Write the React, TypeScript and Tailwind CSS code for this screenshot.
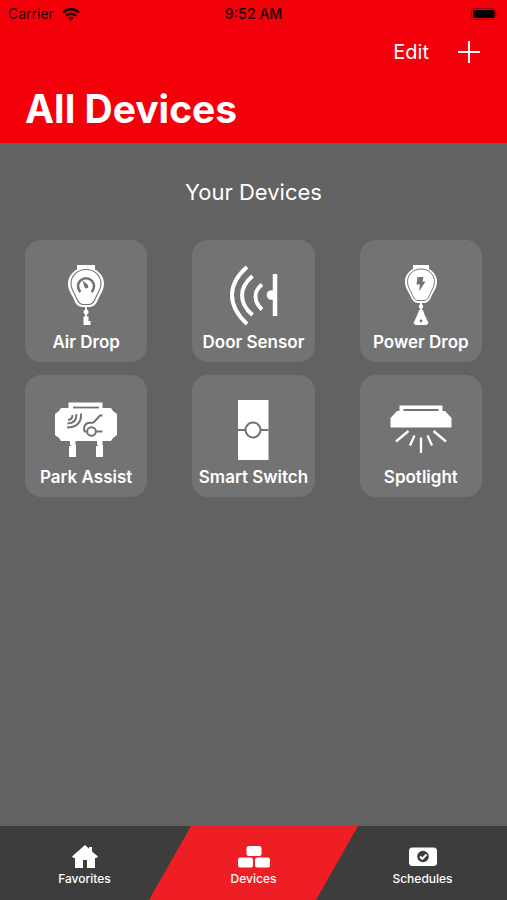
import type { ReactNode } from "react";

type Device = {
  name: string;
  icon: ReactNode;
};

// Lines cut out of the white icons use the card colour
const CARD = "#737373";

function AirDropIcon() {
  return (
    <>
      <path
        d="M23 2h18v4.500c5 2.500 9 8 9 14 0 6-3 10-5 14s-3 9.500-10 9.500h-6c-7 0-8-5.500-10-9.500s-5-8-5-14c0-6 4-11.500 9-14z"
        fill="white"
        stroke="none"
      />
      <path
        d="M32 6.500c9 0 15 7 15 14 0 5-2.500 8.500-4.500 12.500s-3 8.500-7.500 8.500h-6c-4.500 0-5.500-4.500-7.500-8.500S17 25.500 17 20.500c0-7 6-14 15-14z"
        stroke={CARD}
        strokeWidth="1.100"
      />
      <path d="M26.500 29a8 8 0 1 1 11 0" stroke={CARD} strokeWidth="2.600" />
      <path d="M28.500 17.500l5.500 4.500q1 3-1.500 3.500-2 0-2.500-3z" fill={CARD} stroke="none" />
      <path d="M32 43v15" strokeWidth="1.800" />
      <circle cx="32" cy="49" r="2.500" fill="white" stroke="none" />
      <path d="M29.500 53.500h5V58h2v4h-7v-8.500z" fill="white" stroke="none" />
    </>
  );
}

function DoorSensorIcon() {
  return (
    <g strokeWidth="4">
      <path d="M26 4Q11 17 11 32t15 29" />
      <path d="M31.500 13Q21 22 21 32.500T31.500 52" />
      <path d="M41 21.500q-6.500 5-6.500 12T41 46.500" />
      <path d="M54 11v42" strokeWidth="4.500" />
      <circle cx="50.500" cy="32" r="4.800" fill="white" stroke="none" />
    </g>
  );
}

function PowerDropIcon() {
  return (
    <>
      <path
        d="M24 2h16v4c4.500 2.500 8 7 8 12.500 0 5.500-2.500 9-4.500 12.500s-3 9-8.500 9h-6c-5.500 0-6.500-5.500-8.500-9S16 24 16 18.500C16 13 19.500 8.500 24 6z"
        fill="white"
        stroke="none"
      />
      <path
        d="M32 6c8 0 13.500 6 13.500 12.500 0 4.500-2.200 8-4 11.500s-2.500 7.500-6.500 7.500h-6c-4 0-4.700-4-6.500-7.500s-4-7-4-11.500C18.500 12 24 6 32 6z"
        stroke={CARD}
        strokeWidth="1"
      />
      <path d="M28.500 14h6l-1 4.500h3l-6.500 10 1-7h-3.500z" fill={CARD} stroke="none" />
      <path d="M32 38v12" strokeWidth="1.800" />
      <circle cx="32" cy="43.500" r="2.200" fill="white" stroke="none" />
      <path d="M30 47h4l1.500 4.500L39.500 60l-2 2h-11l-2-2 4-8.500z" fill="white" stroke="none" />
      <circle cx="32" cy="58" r="1.400" fill={CARD} stroke="none" />
    </>
  );
}

function ParkAssistIcon() {
  return (
    <>
      <path
        d="M14.500 4.500h34V10H57l2 3 4 3v21l-4 3-2 3H7l-2-3-4-3V16l4-3 2-3h7.500z"
        fill="white"
        stroke="none"
      />
      <path d="M19 9.500h26" stroke={CARD} strokeWidth="1.800" />
      <g stroke={CARD} strokeWidth="2">
        <path d="M27 15.500q1 13.500-14 14" />
        <path d="M22.500 16q0 9.500-9 9.500" />
        <path d="M18.500 17q0 4.500-4.500 5" />
        <path d="M48.500 17.500h-2.500l-6.500 7-5.500.5q-4 1.500-4 6 0 2.500 2.500 3" />
        <circle cx="37.500" cy="33.500" r="4.300" />
        <path d="M42 33.500h6.500" />
      </g>
      <path
        d="M16 43h5.500v4h.5v12h-7V47h1zM43 43h5.500v4h.5v12h-7V47h1z"
        fill="white"
        stroke="none"
      />
      <path d="M15 47.500h2M42 47.500h2" stroke={CARD} strokeWidth="1" />
    </>
  );
}

function SmartSwitchIcon() {
  return (
    <>
      <path d="M17 2h30.500v60H17z" fill="white" stroke="none" />
      <path d="M17 32h30.500" stroke={CARD} strokeWidth="2" />
      <circle cx="32" cy="32" r="7.500" fill="white" stroke={CARD} strokeWidth="2" />
    </>
  );
}

function SpotlightIcon() {
  return (
    <>
      <path
        d="M10.500 7.500h43V13H56l6.500 7v9.500H1.500V20L8 13h2.500z"
        fill="white"
        stroke="none"
      />
      <path d="M14.500 12h35" stroke={CARD} strokeWidth="2" />
      <g strokeWidth="2.300">
        <path d="M19.500 33L7 43.500M25.500 37.500L21 47.500M32 39.500V55M38.500 37.500l4.500 10M44.500 33L57 43.500" />
      </g>
    </>
  );
}

const devices: Device[] = [
  { name: "Air Drop", icon: <AirDropIcon /> },
  { name: "Door Sensor", icon: <DoorSensorIcon /> },
  { name: "Power Drop", icon: <PowerDropIcon /> },
  { name: "Park Assist", icon: <ParkAssistIcon /> },
  { name: "Smart Switch", icon: <SmartSwitchIcon /> },
  { name: "Spotlight", icon: <SpotlightIcon /> },
];

function DeviceCard({ name, icon }: Device) {
  return (
    <button className="flex flex-col items-center w-full h-[122px] pt-[23px] rounded-2xl bg-[#737373]">
      <svg viewBox="0 0 64 64" className="size-16 shrink-0" fill="none" stroke="white">
        {icon}
      </svg>
      <span className="text-[17px] leading-6 mt-[3px] font-semibold whitespace-nowrap">{name}</span>
    </button>
  );
}

function StatusBar() {
  return (
    <div className="grid grid-cols-3 items-center h-7 px-2 text-sm leading-4 text-black/85">
      <div className="flex items-center gap-2">
        <span>Carrier</span>
        <svg viewBox="0 0 18 13" className="w-[18px] h-[13px]" fill="none" stroke="currentColor">
          <path d="M1 4.500a11.500 11.500 0 0 1 16 0" strokeWidth="2.600" />
          <path d="M4 7.700a7.200 7.200 0 0 1 10 0" strokeWidth="2.400" />
          <path d="M9 13l-2.700-2.900a4 4 0 0 1 5.400 0z" fill="currentColor" stroke="none" />
        </svg>
      </div>
      <span className="text-center font-semibold">9:52 AM</span>
      <svg viewBox="0 0 28 12" className="w-7 h-3 justify-self-end">
        <rect x="0.500" y="0.500" width="24" height="11" rx="3.500" fill="none" stroke="black" strokeOpacity="0.350" />
        <rect x="2" y="2" width="21.500" height="8" rx="2" fill="black" />
        <path d="M26 4q2 2 0 4z" fill="black" fillOpacity="0.400" />
      </svg>
    </div>
  );
}

function TabBar() {
  return (
    <nav className="grid grid-cols-3 h-[74px] bg-[#3d3d3d] text-xs leading-4 font-medium">
      <button className="flex flex-col items-center pt-[18px] gap-[3px]">
        <svg viewBox="0 0 26 24" className="w-[26px] h-6" fill="white">
          <path d="M13 1l4 3.700V3h3v4.500l6 5-1.500 1.500H23v10h-8v-8h-4v8H3V14H1.500L0 12.500z" />
        </svg>
        Favorites
      </button>
      <button
        aria-current="page"
        className="flex flex-col items-center -mx-5 pt-[18px] gap-[3px] bg-[#ef1e25] [clip-path:polygon(42px_0,100%_0,calc(100%-42px)_100%,0_100%)]"
      >
        <svg viewBox="0 0 32 24" className="w-8 h-6" fill="white">
          <rect x="8.500" y="2" width="15" height="10" rx="2.500" />
          <rect x="0" y="13.500" width="15" height="10" rx="2.500" />
          <rect x="17" y="13.500" width="15" height="10" rx="2.500" />
        </svg>
        Devices
      </button>
      <button className="flex flex-col items-center pt-[18px] gap-[3px]">
        <svg viewBox="0 0 28 24" className="w-7 h-6">
          <rect y="3.500" width="28" height="18.500" rx="3.500" fill="white" />
          <circle cx="14" cy="12.500" r="5.800" fill="#3d3d3d" />
          <path d="M11 12.500l2.300 2.300 4.200-4.300" fill="none" stroke="white" strokeWidth="2" />
        </svg>
        Schedules
      </button>
    </nav>
  );
}

export default function App() {
  return (
    <div className="flex flex-col min-h-screen bg-[#626262] text-white font-[Inter,sans-serif]">
      <header className="bg-[#f4000b] h-[143px]">
        <StatusBar />
        <div className="flex justify-end items-center gap-7 h-12 pr-[26px]">
          <button className="text-xl">Edit</button>
          <button aria-label="Add device">
            <svg viewBox="0 0 24 24" className="size-6" stroke="white" strokeWidth="2">
              <path d="M12 1v22M1 12h22" />
            </svg>
          </button>
        </div>
        <h1 className="px-[25px] pt-[9px] text-[39px] leading-[48px] font-bold">All Devices</h1>
      </header>
      <main className="flex-1 px-[25px] pt-[33px]">
        <h2 className="text-center text-[22px] leading-8">Your Devices</h2>
        <div className="grid grid-cols-3 gap-x-[45px] gap-y-[13px] pt-8">
          {devices.map((device) => (
            <DeviceCard key={device.name} name={device.name} icon={device.icon} />
          ))}
        </div>
      </main>
      <TabBar />
    </div>
  );
}
